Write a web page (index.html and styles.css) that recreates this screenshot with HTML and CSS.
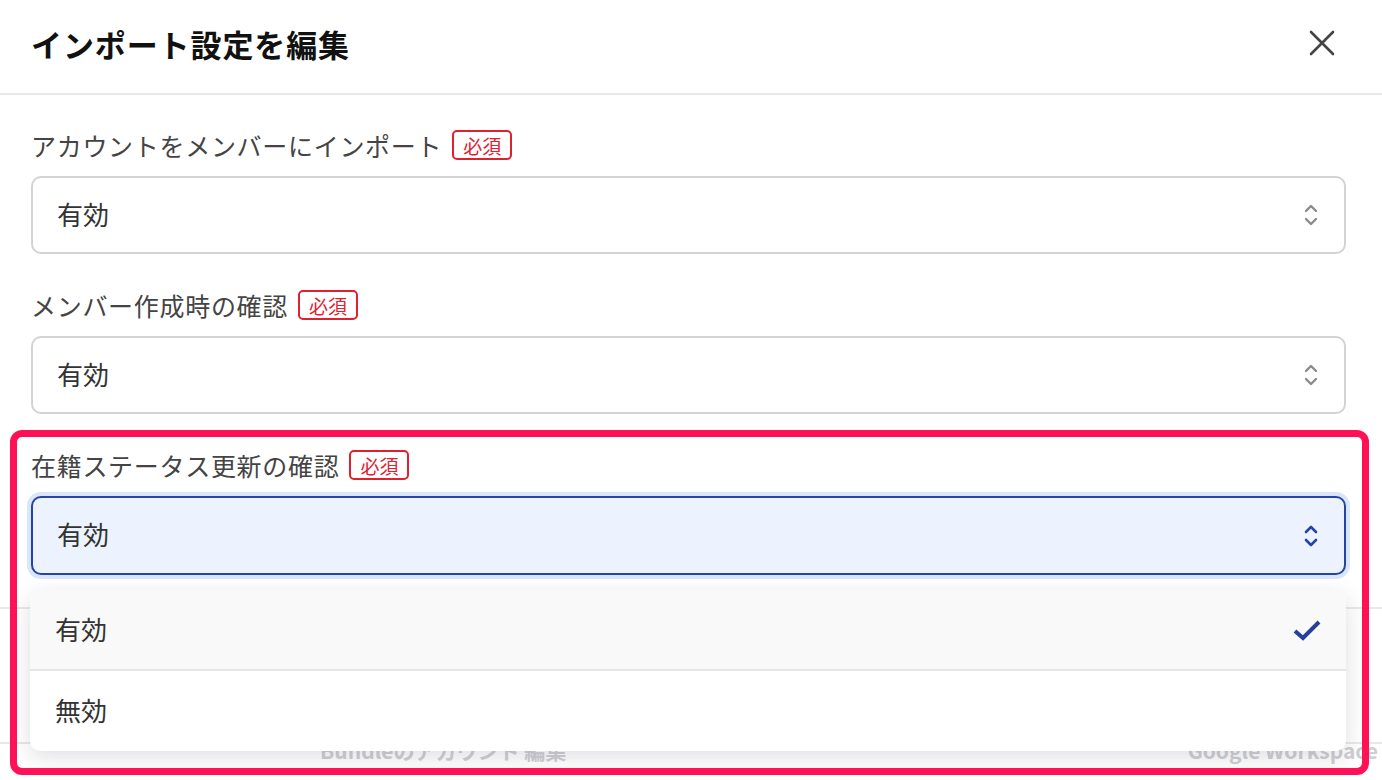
FILE: index.html
```html
<!DOCTYPE html>
<html lang="ja">
<head>
<meta charset="utf-8">
<title>インポート設定を編集</title>
<link rel="stylesheet" href="styles.css">
</head>
<body>
<div class="modal">
  <header class="modal-header">
    <h1 class="modal-title">インポート設定を編集</h1>
    <button class="close-btn" aria-label="閉じる">
      <svg width="26" height="26" viewBox="0 0 26 26"><path d="M2 2 L24 24 M24 2 L2 24" stroke="#444" stroke-width="2.6" stroke-linecap="round"/></svg>
    </button>
  </header>
  <div class="modal-body">
    <div class="field">
      <div class="label-row"><span class="label">アカウントをメンバーにインポート</span><span class="badge">必須</span></div>
      <div class="select">
        <span class="select-value">有効</span>
        <svg class="chev" width="14" height="24" viewBox="0 0 14 24"><path d="M2 8 L7 3 L12 8 M2 16 L7 21 L12 16" fill="none" stroke="#8a8a8a" stroke-width="2.4" stroke-linecap="round" stroke-linejoin="round"/></svg>
      </div>
    </div>
    <div class="field">
      <div class="label-row"><span class="label">メンバー作成時の確認</span><span class="badge">必須</span></div>
      <div class="select">
        <span class="select-value">有効</span>
        <svg class="chev" width="14" height="24" viewBox="0 0 14 24"><path d="M2 8 L7 3 L12 8 M2 16 L7 21 L12 16" fill="none" stroke="#8a8a8a" stroke-width="2.4" stroke-linecap="round" stroke-linejoin="round"/></svg>
      </div>
    </div>
    <div class="field field-open">
      <div class="label-row"><span class="label">在籍ステータス更新の確認</span><span class="badge">必須</span></div>
      <div class="select select-focus">
        <span class="select-value">有効</span>
        <svg class="chev" width="14" height="24" viewBox="0 0 14 24"><path d="M2 8 L7 3 L12 8 M2 16 L7 21 L12 16" fill="none" stroke="#2544a6" stroke-width="2.6" stroke-linecap="round" stroke-linejoin="round"/></svg>
      </div>
      <ul class="menu">
        <li class="menu-item selected"><span>有効</span>
          <svg width="30" height="24" viewBox="0 0 30 24"><path d="M3 13 L11 20 L27 4" fill="none" stroke="#2340a0" stroke-width="4"/></svg>
        </li>
        <li class="menu-item"><span>無効</span></li>
      </ul>
    </div>
  </div>
  <div class="bg-table">
    <div class="bg-row"></div>
    <div class="bg-row bg-row-text"><span class="bg-a">Bundleのアカウント 編集</span><span class="bg-b">Google Workspace</span></div>
  </div>
</div>
<div class="highlight"></div>
</body>
</html>
```
FILE: styles.css
```css
* { box-sizing: border-box; }
html, body { margin: 0; padding: 0; }
body {
  width: 1382px;
  height: 780px;
  overflow: hidden;
  background: #fff;
  font-family: "Noto Sans CJK JP", "Noto Sans", sans-serif;
  color: #333;
  position: relative;
}
.modal-header {
  height: 95px;
  display: flex;
  align-items: center;
  justify-content: space-between;
  padding: 0 47px 6px 31px;
  border-bottom: 2px solid #e8e8e8;
}
.modal-title {
  margin: 0;
  font-size: 31px;
  font-weight: 700;
  color: #111;
  letter-spacing: 0.9px;
}
.close-btn {
  border: 0;
  background: none;
  padding: 0;
  display: flex;
  margin-top: -1px;
}
.modal-body {
  padding: 32px 36px 0 31px;
  display: flex;
  flex-direction: column;
  gap: 33px;
}
.field { position: relative; }
.label-row {
  height: 36px;
  display: flex;
  align-items: center;
  gap: 10px;
  margin-bottom: 13px;
}
.label {
  font-size: 25px;
  color: #444;
  letter-spacing: 0.7px;
}
.badge {
  font-size: 19px;
  color: #e0202f;
  border: 2px solid #e0202f;
  border-radius: 5px;
  height: 30px;
  padding: 0 9px;
  display: flex;
  align-items: center;
  line-height: 1;
}
.select {
  height: 78px;
  border: 2px solid #d6d2d2;
  border-radius: 10px;
  display: flex;
  align-items: center;
  justify-content: space-between;
  padding: 0 26px 4px 24px;
  background: #fff;
}
.select .chev { margin-top: 4px; }
.select-value {
  font-size: 26px;
  color: #333;
}
.select-focus {
  background: #ecf3fe;
  border-color: #2544a6;
  box-shadow: 0 0 0 4px #d9e6fb;
  height: 79px;
}
.menu {
  position: absolute;
  left: -1px;
  right: 0;
  top: calc(100% + 15px);
  margin: 0;
  padding: 0;
  list-style: none;
  background: #fff;
  border-radius: 10px;
  box-shadow: 0 6px 22px rgba(30, 30, 60, 0.14);
  overflow: hidden;
  z-index: 5;
}
.menu-item {
  height: 80px;
  display: flex;
  align-items: center;
  justify-content: space-between;
  padding: 0 24px 3px 25px;
  font-size: 26px;
  color: #333;
}
.menu-item svg { margin-top: 3px; }
.menu-item.selected {
  background: #f9f9fa;
  border-bottom: 2px solid #e6e6e6;
  height: 81px;
}
.bg-table {
  margin-top: 32px;
  border-top: 2px solid #e8e8e8;
}
.bg-row { height: 133px; }
.bg-row-text {
  border-top: 2px solid #e8e8e8;
  height: 40px;
  display: flex;
  align-items: flex-start;
  font-size: 21px;
  line-height: 24px;
  color: #cfcfd3;
  font-weight: 700;
}
.bg-row-text span { margin-top: -6px; }
.bg-a { margin-left: 320px; }
.bg-b { margin-left: auto; margin-right: 4px; }
.highlight {
  position: absolute;
  left: 10px;
  top: 430px;
  width: 1359px;
  height: 345px;
  border: 7px solid #ff1155;
  border-radius: 12px;
  pointer-events: none;
  z-index: 10;
}
```
